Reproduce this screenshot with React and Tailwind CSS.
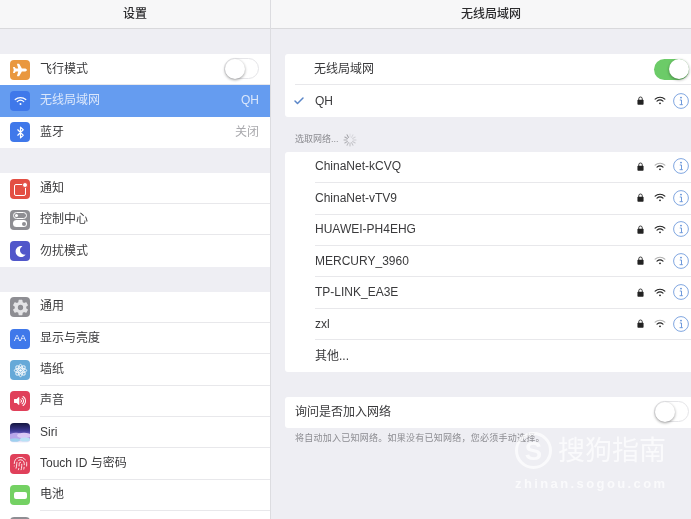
import { Bluetooth, Check, Fingerprint } from 'lucide-react';
import { FaMoon, FaPlane, FaVolumeUp } from 'react-icons/fa';
import { IoSettingsSharp } from 'react-icons/io5';

const WifiIcon = ({ className = '', dim = false }) => (
  <svg viewBox="0 0 16 12" className={className} fill="none" stroke="currentColor" strokeWidth="1.5" strokeLinecap="round">
    <path d="M1.5 4.2C5 .9 11 .9 14.5 4.2" opacity={dim ? 0.35 : 1} />
    <path d="M4 6.8c2.3-2 5.7-2 8 0" />
    <circle cx="8" cy="9.8" r="1.2" fill="currentColor" stroke="none" />
  </svg>
);

const LockIcon = () => (
  <svg viewBox="0 0 8 10" className="h-[9px] w-[7px] text-[#222]">
    <path d="M2 4.5V3a2 2 0 0 1 4 0v1.5" fill="none" stroke="currentColor" strokeWidth="1" />
    <rect x="0.5" y="4.2" width="7" height="5.6" rx="0.8" fill="currentColor" />
  </svg>
);

const InfoIcon = () => (
  <svg viewBox="0 0 16 16" className="ml-[7px] h-[16px] w-[16px] text-[#5f8fd8]">
    <circle cx="8" cy="8" r="7.4" fill="none" stroke="currentColor" strokeWidth="0.8" />
    <circle cx="8" cy="4.6" r="0.9" fill="currentColor" />
    <path d="M6.8 7h1.7v4.6M6.6 11.7h3.2" fill="none" stroke="currentColor" strokeWidth="0.9" />
  </svg>
);

const FlowerIcon = () => (
  <svg viewBox="0 0 16 16" className="h-[15px] w-[15px]" fill="none" stroke="currentColor" strokeWidth="0.9">
    {[0, 45, 90, 135].map((a) => (
      <ellipse key={a} cx="8" cy="8" rx="2.6" ry="6.6" transform={`rotate(${a} 8 8)`} />
    ))}
    <circle cx="8" cy="8" r="1.4" fill="currentColor" stroke="none" />
  </svg>
);

const SiriIcon = () => (
  <svg viewBox="0 0 20 20" className="h-[20px] w-[20px]">
    <ellipse cx="6" cy="13" rx="7" ry="3.2" fill="#b9a6ea" />
    <ellipse cx="14" cy="12.5" rx="7" ry="2.8" fill="#d9c9f5" />
    <ellipse cx="5" cy="17" rx="5" ry="1.8" fill="#9fd0ee" />
    <ellipse cx="15" cy="16.6" rx="5" ry="2" fill="#b9e2f5" />
  </svg>
);

const Toggle = ({ on }) => (
  <div className={`relative h-[21px] w-[35px] rounded-full ${on ? 'bg-[#6ccb68]' : 'border border-[#e5e5e8] bg-white'}`}>
    <div className={`absolute top-0 h-[20px] w-[20px] rounded-full bg-white shadow-[0_1px_3px_rgba(0,0,0,0.4)] ${on ? 'right-0' : 'left-0'}`} />
  </div>
);

const Tile = ({ color, children }) => (
  <div className={`flex h-[20px] w-[20px] shrink-0 items-center justify-center overflow-hidden rounded-[4px] text-white ${color}`}>{children}</div>
);

const Row = ({ icon, color, label, value, active, last, toggle }) => (
  <div className={`flex h-[31.3px] items-center pl-[10px] ${active ? 'bg-[#659cf0]' : 'bg-white'}`}>
    <Tile color={color}>{icon}</Tile>
    <div className={`ml-[10px] flex h-full flex-1 items-center justify-between pb-[1px] pr-[11px] ${last || active ? '' : 'border-b border-[#e8e8eb]'}`}>
      <span className={`text-[12px] ${active ? 'text-[#dbe7fb]' : 'text-[#3a3a3c]'}`}>{label}</span>
      {value && <span className={`text-[12px] ${active ? 'text-[#dbe7fb]' : 'text-[#a9a9ad]'}`}>{value}</span>}
      {toggle}
    </div>
  </div>
);

const NetworkRow = ({ name, strong, checked, last }) => (
  <div className="flex h-[31.45px] items-center">
    <div className="flex w-[30px] shrink-0 justify-center">
      {checked && <Check size={12} strokeWidth={3} className="-translate-x-[1px] text-[#5a86c8]" />}
    </div>
    <div className={`flex h-full flex-1 items-center justify-between pb-[1px] pr-[2px] ${last ? '' : 'border-b border-[#e8e8eb]'}`}>
      <span className="text-[12px] text-[#3a3a3c]">{name}</span>
      {strong !== undefined && (
        <div className="flex items-center">
          <LockIcon />
          <WifiIcon dim={!strong} className="ml-[10px] h-[9px] w-[12px] text-[#222]" />
          <InfoIcon />
        </div>
      )}
    </div>
  </div>
);

const Spinner = () => (
  <svg viewBox="0 0 14 14" className="ml-[4px] h-[14px] w-[14px]" stroke="#9b9ba0" strokeWidth="1" strokeLinecap="round">
    {[0, 30, 60, 90, 120, 150, 180, 210, 240, 270, 300, 330].map((a, i) => (
      <path key={a} d="M7 1v3" transform={`rotate(${a} 7 7)`} opacity={0.2 + i * 0.065} />
    ))}
  </svg>
);

const networks = [
  ['ChinaNet-kCVQ', false],
  ['ChinaNet-vTV9', true],
  ['HUAWEI-PH4EHG', true],
  ['MERCURY_3960', false],
  ['TP-LINK_EA3E', true],
  ['zxl', false],
];

export default function App() {
  return (
    <div className="relative flex h-[519px] w-[691px] overflow-hidden bg-[#eeeef3] font-['Liberation_Sans','Noto_Sans_CJK_SC',sans-serif] blur-[0.5px]">
      <aside className="w-[271px] shrink-0 border-r border-[#dcdce0]">
        <header className="flex h-[29px] items-center justify-center border-b border-[#d9d9dc] bg-[#f7f7f8] pb-[1px] text-[12px] font-medium text-[#2b2b2d]">设置</header>

        <div className="mt-[25px]">
          <Row color="bg-[#e9983f]" icon={<FaPlane size={14} />} label="飞行模式" toggle={<Toggle />} />
          <Row color="bg-[#3f78ea]" icon={<WifiIcon className="h-[10px] w-[13px]" />} label="无线局域网" value="QH" active />
          <Row color="bg-[#3f78ea]" icon={<Bluetooth size={13} strokeWidth={2.2} />} label="蓝牙" value="关闭" last />
        </div>

        <div className="mt-[25px]">
          <Row
            color="bg-[#e34f43]"
            icon={
              <div className="relative mt-[2px] h-[12px] w-[12px] rounded-[2px] border border-white">
                <div className="absolute -right-[3px] -top-[3px] h-[6px] w-[6px] rounded-full border border-[#e34f43] bg-white" />
              </div>
            }
            label="通知"
          />
          <Row
            color="bg-[#8e8e93]"
            icon={
              <div className="flex flex-col gap-[1px]">
                <div className="flex h-[7px] w-[14px] items-center justify-start rounded-full border border-white pl-[1px]">
                  <div className="h-[3px] w-[3px] rounded-full bg-white" />
                </div>
                <div className="flex h-[7px] w-[14px] items-center justify-end rounded-full bg-white pr-[1px]">
                  <div className="h-[4px] w-[4px] rounded-full bg-[#8e8e93]" />
                </div>
              </div>
            }
            label="控制中心"
          />
          <Row color="bg-[#5157ca]" icon={<FaMoon size={11} />} label="勿扰模式" last />
        </div>

        <div className="mt-[25px]">
          <Row color="bg-[#8e8e93]" icon={<IoSettingsSharp size={17} className="text-[#e4e4e6]" />} label="通用" />
          <Row color="bg-[#3f78ea]" icon={<span className="text-[9px]">AA</span>} label="显示与亮度" />
          <Row color="bg-[#66a9d8]" icon={<FlowerIcon />} label="墙纸" />
          <Row color="bg-[#e0405a]" icon={<FaVolumeUp size={12} />} label="声音" />
          <Row color="bg-[linear-gradient(180deg,#14163f_0%,#3f3a96_40%,#8d7bd8_65%,#ffffff_100%)]" icon={<SiriIcon />} label="Siri" />
          <Row color="bg-[#e0405a]" icon={<Fingerprint size={15} strokeWidth={1.4} />} label="Touch ID 与密码" />
          <Row color="bg-[#74d163]" icon={<div className="h-[7px] w-[13px] rounded-[2px] bg-white" />} label="电池" />
          <Row color="bg-[#8e8e93]" icon={null} label="" />
        </div>
      </aside>

      <main className="flex-1">
        <header className="flex h-[29px] items-center justify-center border-b border-[#d9d9dc] bg-[#f7f7f8] pb-[1px] pl-[20px] text-[12px] font-medium text-[#2b2b2d]">无线局域网</header>

        <div className="ml-[14px] mt-[25px] rounded-l-[3px] bg-white">
          <div className="ml-[10px] flex h-[31.3px] items-center justify-between border-b border-[#e8e8eb] pl-[19px] pr-[2px]">
            <span className="text-[12px] text-[#3a3a3c]">无线局域网</span>
            <Toggle on />
          </div>
          <NetworkRow name="QH" strong checked last />
        </div>

        <div className="ml-[24px] flex h-[35px] items-center pt-[12px] text-[9px] text-[#8c8c91]">
          选取网络... <Spinner />
        </div>

        <div className="ml-[14px] rounded-l-[3px] bg-white">
          {networks.map(([name, strong]) => (
            <NetworkRow key={name} name={name} strong={strong} />
          ))}
          <NetworkRow name="其他..." last />
        </div>

        <div className="ml-[14px] mt-[25px] flex h-[31.3px] items-center justify-between rounded-l-[3px] bg-white pb-[1px] pl-[10px] pr-[2px]">
          <span className="text-[12px] text-[#3a3a3c]">询问是否加入网络</span>
          <Toggle />
        </div>
        <p className="ml-[24px] mt-[4px] text-[9px] tracking-[0.25px] text-[#8c8c91]">将自动加入已知网络。如果没有已知网络，您必须手动选择。</p>
      </main>

      <div className="absolute left-[515px] top-[432px] text-white/70">
        <div className="flex items-center">
          <div className="flex h-[37px] w-[37px] items-center justify-center rounded-full border-[3px] border-white/70 text-[26px] font-bold leading-none">S</div>
          <span className="ml-[6px] pt-[2px] text-[27px] leading-none">搜狗指南</span>
        </div>
        <div className="mt-[5px] text-[13px] font-bold tracking-[2.4px]">zhinan.sogou.com</div>
      </div>
    </div>
  );
}
